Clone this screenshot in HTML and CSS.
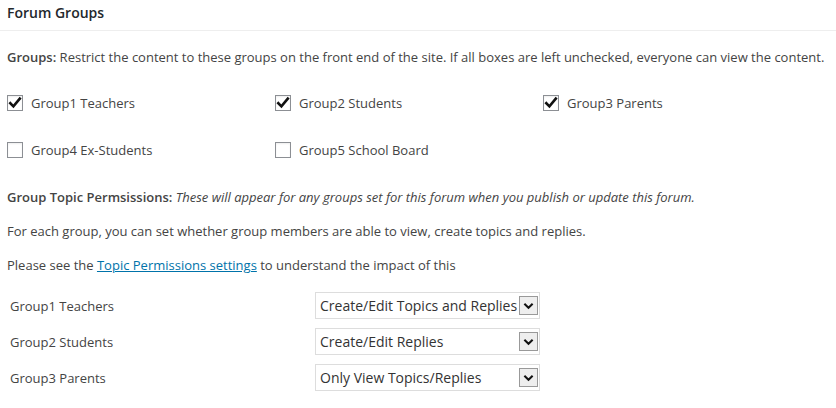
FILE: index.html
```html
<!DOCTYPE html>
<html>
<head>
<meta charset="utf-8">
<link rel="stylesheet" href="styles.css">
</head>
<body>
<div class="box">
  <div class="box-head">
    <h2 class="box-title">Forum Groups</h2>
  </div>
  <div class="box-body">
    <p class="line first"><strong>Groups:</strong> Restrict the content to these groups on the front end of the site. If all boxes are left unchecked, everyone can view the content.</p>
    <div class="groups">
      <label class="check"><span class="cb"><svg viewBox="0 0 16 16" width="16" height="16"><path d="M3.3 8.2 L6.4 11.3 L12.8 3.6" fill="none" stroke="#111" stroke-width="2.6" stroke-linecap="square"/></svg></span>Group1 Teachers</label>
      <label class="check"><span class="cb"><svg viewBox="0 0 16 16" width="16" height="16"><path d="M3.3 8.2 L6.4 11.3 L12.8 3.6" fill="none" stroke="#111" stroke-width="2.6" stroke-linecap="square"/></svg></span>Group2 Students</label>
      <label class="check"><span class="cb"><svg viewBox="0 0 16 16" width="16" height="16"><path d="M3.3 8.2 L6.4 11.3 L12.8 3.6" fill="none" stroke="#111" stroke-width="2.6" stroke-linecap="square"/></svg></span>Group3 Parents</label>
      <label class="check"><span class="cb"></span>Group4 Ex-Students</label>
      <label class="check"><span class="cb"></span>Group5 School Board</label>
    </div>
    <p class="line sec"><strong>Group Topic Permsissions:</strong> <em>These will appear for any groups set for this forum when you publish or update this forum.</em></p>
    <p class="line next">For each group, you can set whether group members are able to view, create topics and replies.</p>
    <p class="line next">Please see the <a href="#">Topic Permissions settings</a> to understand the impact of this</p>
    <div class="perms">
      <div class="perm-row">
        <span class="perm-label">Group1 Teachers</span>
        <div class="select"><span class="select-text">Create/Edit Topics and Replies</span><span class="arrow"><svg viewBox="0 0 12 8" width="11" height="8"><path d="M1.5 1.5 L6 6 L10.5 1.5" fill="none" stroke="#111" stroke-width="2.2"/></svg></span></div>
      </div>
      <div class="perm-row">
        <span class="perm-label">Group2 Students</span>
        <div class="select"><span class="select-text">Create/Edit Replies</span><span class="arrow"><svg viewBox="0 0 12 8" width="11" height="8"><path d="M1.5 1.5 L6 6 L10.5 1.5" fill="none" stroke="#111" stroke-width="2.2"/></svg></span></div>
      </div>
      <div class="perm-row">
        <span class="perm-label">Group3 Parents</span>
        <div class="select"><span class="select-text">Only View Topics/Replies</span><span class="arrow"><svg viewBox="0 0 12 8" width="11" height="8"><path d="M1.5 1.5 L6 6 L10.5 1.5" fill="none" stroke="#111" stroke-width="2.2"/></svg></span></div>
      </div>
    </div>
  </div>
</div>
</body>
</html>
```
FILE: styles.css
```css
html, body {
  margin: 0;
  padding: 0;
  background: #fff;
}
body {
  font-family: "Open Sans", "Noto Sans", sans-serif;
  font-size: 13px;
  color: #444;
}
.box-head {
  border-bottom: 1px solid #eee;
  padding: 3px 7px 7px;
}
.box-title {
  margin: 0;
  font-size: 14px;
  font-weight: 600;
  line-height: 20px;
  color: #23282d;
}
.box-body {
  padding: 0 7px;
}
.line {
  margin: 0;
  line-height: 20px;
}
.line.first { margin-top: 16px; }
.line.sec { margin-top: 27px; }
.line.next { margin-top: 14px; }
.line strong { font-weight: 600; }
a { color: #0073aa; }
.groups {
  display: grid;
  grid-template-columns: 268px 268px 268px;
  row-gap: 27px;
  margin-top: 26px;
}
.check {
  display: flex;
  align-items: center;
  height: 20px;
  gap: 8px;
}
.cb {
  width: 16px;
  height: 16px;
  box-sizing: border-box;
  border: 1px solid #8c8f94;
  background: #fff;
  display: flex;
  align-items: center;
  justify-content: center;
  box-shadow: inset 0 1px 2px rgba(0,0,0,0.07);
}
.cb svg { display: block; flex: none; }
.perms {
  margin-top: 17px;
  display: flex;
  flex-direction: column;
  gap: 9px;
}
.perm-row {
  display: flex;
  align-items: center;
  height: 27px;
}
.perm-label {
  width: 308px;
  padding-left: 3px;
  box-sizing: border-box;
}
.select {
  width: 225px;
  height: 27px;
  box-sizing: border-box;
  border: 1px solid #ddd;
  display: flex;
  align-items: center;
  justify-content: space-between;
  padding: 0 1px 0 4px;
  font-size: 14px;
  color: #333;
}
.arrow {
  width: 19px;
  height: 19px;
  box-sizing: border-box;
  border: 1px solid #999;
  background: #eee;
  display: flex;
  align-items: center;
  justify-content: center;
}
.arrow svg { display: block; }
```
